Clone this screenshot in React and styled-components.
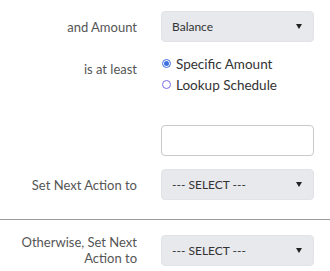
import React from "react";
import styled, { createGlobalStyle } from "styled-components";

const Global = createGlobalStyle`
  body {
    margin: 0;
    background: #fff;
    font-family: Lato, "Open Sans", sans-serif;
  }
`;

const Form = styled.div`
  width: 330px;
  padding-top: 11px;
`;

const Row = styled.div`
  display: grid;
  grid-template-columns: 137px 153px;
  column-gap: 24px;
  align-items: ${p => (p.top ? "start" : "center")};
  margin-top: ${p => p.gap || 0}px;
`;

const Label = styled.div`
  text-align: right;
  font-size: 13px;
  line-height: 16px;
  color: #555;
  padding-top: ${p => p.pad || 0}px;
`;

const Select = styled.div`
  height: 31px;
  box-sizing: border-box;
  background: #e7e9ed;
  border: 1px solid #e1e3e7;
  border-radius: 4px;
  display: flex;
  align-items: center;
  justify-content: space-between;
  padding: 0 11px 0 10px;
  font-size: 12px;
  color: #333;
`;

const Caret = styled.span`
  width: 0;
  height: 0;
  border-left: 3.5px solid transparent;
  border-right: 3.5px solid transparent;
  border-top: 5px solid #222;
`;

const Radios = styled.div`
  display: flex;
  flex-direction: column;
`;

const RadioLine = styled.div`
  display: flex;
  align-items: center;
  height: 21px;
  font-size: 13.5px;
  color: #333;
`;

const Dot = styled.span`
  width: 9px;
  height: 9px;
  box-sizing: border-box;
  border-radius: 50%;
  border: 1px solid ${p => (p.on ? "#3b6fe0" : "#7a6be8")};
  margin: 0 5px 0 1px;
  display: flex;
  align-items: center;
  justify-content: center;
  &::after {
    content: "";
    display: ${p => (p.on ? "block" : "none")};
    width: 5px;
    height: 5px;
    border-radius: 50%;
    background: #3b6fe0;
  }
`;

const Input = styled.div`
  height: 31px;
  box-sizing: border-box;
  border: 1px solid #c9c9c9;
  border-radius: 4px;
  background: #fff;
`;

const Divider = styled.hr`
  border: 0;
  border-top: 1px solid #9a9a9a;
  margin: 19px 0 0;
`;

export default function App() {
  return (
    <>
      <Global />
      <Form>
        <Row>
          <Label>and Amount</Label>
          <Select>
            Balance <Caret />
          </Select>
        </Row>
        <Row top gap={11}>
          <Label pad={8}>is at least</Label>
          <Radios>
            <RadioLine>
              <Dot on />
              Specific Amount
            </RadioLine>
            <RadioLine>
              <Dot />
              Lookup Schedule
            </RadioLine>
          </Radios>
        </Row>
        <Row gap={30}>
          <Label />
          <Input />
        </Row>
        <Row gap={13}>
          <Label>Set Next Action to</Label>
          <Select>
            --- SELECT --- <Caret />
          </Select>
        </Row>
        <Divider />
        <Row gap={14}>
          <Label>
            Otherwise, Set Next
            <br />
            Action to
          </Label>
          <Select>
            --- SELECT --- <Caret />
          </Select>
        </Row>
      </Form>
    </>
  );
}
